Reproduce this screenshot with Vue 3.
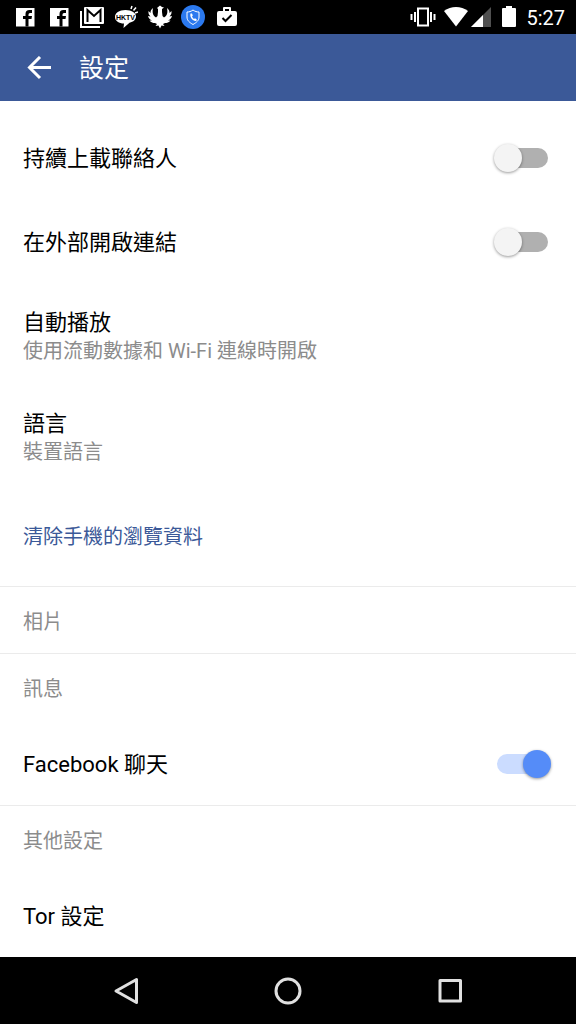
<script setup>
import { ref } from 'vue'

const uploadContacts = ref(false)
const openExternally = ref(false)
const chat = ref(true)
</script>

<template>
  <div class="screen">
    <div class="status">
      <div class="notices">
        <svg v-for="n in 2" :key="n" viewBox="0 0 24 24" aria-hidden="true">
          <path fill="#fff" d="M3 3h18.500v18.500H3z" />
          <path fill="#000" d="M12.500 21.500V14H10v-3h2.500V9q0-4 4-4H19v3h-2q-1.500 0-1.500 1.500V11H19l-.5 3h-3v7.500z" />
        </svg>
        <svg viewBox="0 0 24 24" aria-hidden="true">
          <path fill="none" stroke="#fff" stroke-width="2" d="M1 6v16h19" />
          <rect x="4" y="2" width="20" height="17" rx="1" fill="#fff" />
          <path fill="none" stroke="#000" stroke-width="2" d="M7.500 17V5l6.500 6 6.500-6v12" />
        </svg>
        <svg viewBox="0 0 24 24" aria-hidden="true">
          <path fill="#fff" d="M11.500 5C5 5 1 8 1 12c0 4 4 6.500 9 6.500l-.5 4.500 6-5.200c4-1 6.500-3.300 6.500-6.300C22 8 18 5 11.500 5z" />
          <path stroke="#fff" stroke-width="1.500" d="M17 4l1-3M19.500 5.500l2.500-3M21 8l3-1" />
          <text x="11.500" y="14.500" text-anchor="middle" class="bubble-text">HKTV</text>
        </svg>
        <svg viewBox="0 0 24 24" aria-hidden="true">
          <path fill="#fff" d="M12 .5l2 1.500 2 .5-2 1.500v3l.5 4 1.500 1.500c3-2 4-4.500 3-9.500 2 1.500 2.500 3 2.500 5L23.500 6c.3 2.500-.5 4-2 5.500l2.500-.5c-.5 2.500-2 3.500-4 4.500h2.500c-1.500 2-3.500 2.500-5.500 2.500l-2 1 1.500 2-3-.5L12 23.500 10.500 20.500l-3 .5L9 19l-2-1c-2 0-4-.5-5.500-2.500H4C2 14.500.5 13.500 0 11l2.500.5C1 10 .2 8.500.5 6l2 2c0-2 .5-3.500 2.500-5C4 8 5 10.500 8 12.500L9.500 11l.5-4V4L9 3z" />
        </svg>
        <svg viewBox="0 0 24 24" aria-hidden="true">
          <circle cx="12" cy="12" r="12" fill="#2b79ef" />
          <path fill="none" stroke="#fff" d="M12 5c2 1.500 4 2 6 2v5c0 3.500-2.500 5.500-6 7.500-3.500-2-6-4-6-7.500V7c2 0 4-.5 6-2z" />
          <path fill="#fff" d="M9.500 8.500l1.500 0 .8 2-.8 1q.8 1.500 2 2.500l1-.8 1.800 1.200-.5 1.500C12 16.500 8.300 12 9.500 8.500z" />
        </svg>
        <svg viewBox="0 0 24 24" aria-hidden="true">
          <path fill="#fff" fill-rule="evenodd" d="M8 6V3q0-1 1-1h6q1 0 1 1v3h4q2 0 2 2v11q0 2-2 2H4q-2 0-2-2V8q0-2 2-2zM10 6h4V4h-4z" />
          <path fill="none" stroke="#000" stroke-width="2" d="M7.500 13l3 3 6-6" />
        </svg>
      </div>
      <div class="system">
        <svg class="vibrate" viewBox="0 0 26 24" aria-hidden="true">
          <path fill="none" stroke="#fff" stroke-width="2" d="M1.500 9v6M5 7v10M21 7v10M24.500 9v6M8 3.500h10v17H8z" />
        </svg>
        <svg class="wifi" viewBox="0 0 26 24" aria-hidden="true">
          <path fill="#fff" d="M13 21.500L1 6C8 .8 18 .8 25 6z" />
        </svg>
        <svg class="signal" viewBox="0 0 20 24" aria-hidden="true">
          <path fill="#505050" d="M20 2v20H0z" />
          <path fill="#fff" d="M12 10v12H0z" />
        </svg>
        <svg class="battery" viewBox="0 0 14 24" aria-hidden="true">
          <path fill="#fff" d="M4 1h6v2h3q1 0 1 1v17q0 1-1 1H1q-1 0-1-1V4q0-1 1-1h3z" />
        </svg>
        <time>5:27</time>
      </div>
    </div>

    <header class="bar">
      <button class="back" type="button" aria-label="返回">
        <svg viewBox="0 0 26 24" aria-hidden="true">
          <path fill="none" stroke="#fff" stroke-width="3" d="M25 11.500H4M14 1L3.500 11.500 14 22" />
        </svg>
      </button>
      <h1>設定</h1>
    </header>

    <main>
      <label class="row">
        <span>持續上載聯絡人</span>
        <input v-model="uploadContacts" type="checkbox" role="switch" class="switch">
      </label>
      <label class="row">
        <span>在外部開啟連結</span>
        <input v-model="openExternally" type="checkbox" role="switch" class="switch">
      </label>
      <button class="row double" type="button">
        <span>自動播放</span>
        <small>使用流動數據和 Wi-Fi 連線時開啟</small>
      </button>
      <button class="row double" type="button">
        <span>語言</span>
        <small>裝置語言</small>
      </button>
      <button class="row clear" type="button">
        <span>清除手機的瀏覽資料</span>
      </button>
      <h2>相片</h2>
      <h2>訊息</h2>
      <label class="row">
        <span>Facebook 聊天</span>
        <input v-model="chat" type="checkbox" role="switch" class="switch">
      </label>
      <h2>其他設定</h2>
      <button class="row" type="button">
        <span>Tor 設定</span>
      </button>
    </main>

    <nav>
      <button type="button" aria-label="返回">
        <svg viewBox="0 0 28 28"><path d="M24.500 2.500v23L4 14z" /></svg>
      </button>
      <button type="button" aria-label="主畫面">
        <svg viewBox="0 0 28 28"><circle cx="14" cy="14" r="12" /></svg>
      </button>
      <button type="button" aria-label="最近使用">
        <svg viewBox="0 0 28 28"><path d="M4 3.500h20.500V24H4z" /></svg>
      </button>
    </nav>
  </div>
</template>

<style>
body {
  margin: 0;
}
</style>

<style scoped>
.screen {
  display: flex;
  flex-direction: column;
  min-height: 100vh;
  background: #fff;
  color: #000;
  font-family: Roboto, "Noto Sans CJK TC", sans-serif;
}

svg {
  display: block;
}

button {
  margin: 0;
  padding: 0;
  border: 0;
  background: none;
  color: inherit;
  font: inherit;
  text-align: left;
}

.status {
  display: flex;
  align-items: center;
  justify-content: space-between;
  height: 34px;
  padding: 0 11px 0 13px;
  background: #000;
  color: #fff;
}

.notices {
  display: flex;
  justify-content: space-between;
  width: 226px;
}

.notices svg {
  width: 24px;
  height: 24px;
}

.bubble-text {
  fill: #000;
  font: bold 7px "Liberation Sans", sans-serif;
}

.system {
  display: flex;
  align-items: center;
}

.system svg {
  height: 24px;
}

.vibrate {
  width: 26px;
  margin-right: 7px;
}

.wifi {
  width: 26px;
  margin-right: 2px;
}

.signal {
  width: 20px;
  margin-right: 11px;
}

.battery {
  width: 14px;
  margin-right: 10px;
}

time {
  padding-top: 1px;
  font-size: 20px;
  line-height: 24px;
}

.bar {
  display: flex;
  align-items: center;
  gap: 27px;
  height: 67px;
  padding: 0 26px;
  background: #3b5998;
  color: #fff;
}

.back svg {
  width: 26px;
  height: 24px;
}

h1 {
  margin: 0;
  padding-top: 3px;
  font-size: 25px;
  font-weight: 400;
  line-height: 36px;
}

main {
  display: flex;
  flex: 1;
  flex-direction: column;
  padding-top: 15px;
}

.row {
  display: flex;
  align-items: center;
  justify-content: space-between;
  box-sizing: border-box;
  min-height: 84px;
  padding: 0 25px 0 23px;
  font-size: 22px;
  line-height: 32px;
}

.row > span {
  padding-top: 2px;
}

.double {
  flex-direction: column;
  align-items: flex-start;
  justify-content: center;
  min-height: 101px;
}

.double > span {
  padding-top: 0;
}

small {
  color: #8c8c8c;
  font-size: 20px;
  line-height: 24px;
}

.clear {
  min-height: 100px;
  color: #3b5998;
  font-size: 20px;
}

h2 {
  margin: 0;
  padding: 20px 23px 16px;
  border-top: 1px solid #ebebeb;
  color: #8c8c8c;
  font-size: 20px;
  font-weight: 400;
  line-height: 30px;
}

h2 + .row {
  min-height: 85px;
  padding-top: 2px;
}

.switch {
  position: relative;
  width: 57px;
  height: 28px;
  margin: 0;
  appearance: none;
}

.switch::before {
  position: absolute;
  inset: 4px 3px;
  border-radius: 10px;
  background: #b0b0b0;
  content: "";
}

.switch::after {
  position: absolute;
  top: 0;
  left: 0;
  width: 28px;
  height: 28px;
  border-radius: 50%;
  background: #f4f4f4;
  box-shadow: 0 1px 3px rgb(0 0 0 / 40%);
  content: "";
}

.switch:checked::before {
  background: #cbdcff;
}

.switch:checked::after {
  right: 0;
  left: auto;
  background: #558cf8;
}

nav {
  display: grid;
  grid-template-columns: repeat(3, 162px);
  justify-content: center;
  height: 67px;
  background: #000;
}

nav button {
  display: grid;
  place-items: center;
}

nav svg {
  width: 28px;
  height: 28px;
  fill: none;
  stroke: #e0e0e0;
  stroke-width: 3;
  stroke-linejoin: round;
}
</style>
